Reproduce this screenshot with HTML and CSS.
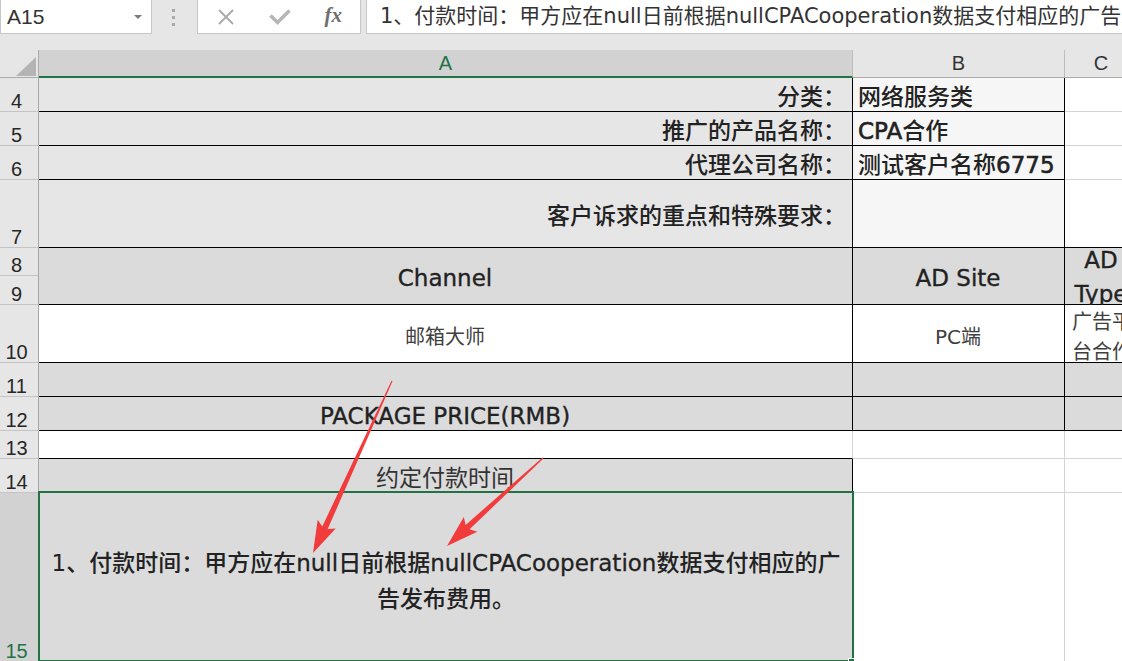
FILE: index.html
```html
<!DOCTYPE html>
<html lang="zh">
<head>
<meta charset="utf-8">
<title>Sheet</title>
<link rel="stylesheet" href="styles.css">
</head>
<body>
<div class="app">
  <div class="toolbar">
    <div class="namebox"><span class="ref">A15</span><span class="caret"></span></div>
    <div class="grip"><i></i><i></i><i></i></div>
    <div class="fxbox">
      <span class="slot"><svg width="18" height="16" viewBox="0 0 18 16"><path d="M2 1 L16 15 M16 1 L2 15" stroke="#a9a9a9" stroke-width="1.8" fill="none"/></svg></span>
      <span class="slot"><svg width="22" height="16" viewBox="0 0 22 16"><path d="M1.5 6.5 L8.5 13.5 L20.5 1.5" stroke="#b5b5b5" stroke-width="3.4" fill="none"/></svg></span>
      <span class="slot fx"><i>f</i>x</span>
    </div>
    <div class="formula">1、付款时间：甲方应在null日前根据nullCPACooperation数据支付相应的广告发布费用。</div>
  </div>

  <div class="sheet">
    <div class="corner"><svg width="20" height="19" viewBox="0 0 20 19"><polygon points="20,0 20,19 0,19" fill="#b4b4b4"/></svg></div>
    <div class="ch sel">A</div>
    <div class="ch">B</div>
    <div class="ch">C</div>

    <div class="rh">4</div>
    <div class="c b g1 right bold">分类：</div>
    <div class="c b g3 bold">网络服务类</div>
    <div class="c"></div>

    <div class="rh">5</div>
    <div class="c b g1 right bold">推广的产品名称：</div>
    <div class="c b g3 bold"><span class="heavy">CPA</span>合作</div>
    <div class="c"></div>

    <div class="rh">6</div>
    <div class="c b g1 right bold">代理公司名称：</div>
    <div class="c b g3 bold">测试客户名称<span class="heavy">6775</span></div>
    <div class="c"></div>

    <div class="rh">7</div>
    <div class="c b g1 right bold">客户诉求的重点和特殊要求：</div>
    <div class="c b g3"></div>
    <div class="c bb"></div>

    <div class="rh">8</div>
    <div class="c b g2 center span2 head">Channel</div>
    <div class="c b g2 center span2 head">AD Site</div>
    <div class="c b g2 center span2 head tall">AD Type</div>
    <div class="rh">9</div>

    <div class="rh">10</div>
    <div class="c b center small">邮箱大师</div>
    <div class="c b center small">PC端</div>
    <div class="c b small wrap">广告平台合作</div>

    <div class="rh">11</div>
    <div class="c b g2"></div>
    <div class="c b g2"></div>
    <div class="c b g2"></div>

    <div class="rh">12</div>
    <div class="c b g2 center head">PACKAGE PRICE(RMB)</div>
    <div class="c b g2"></div>
    <div class="c b g2"></div>

    <div class="rh">13</div>
    <div class="c bb"></div>
    <div class="c"></div>
    <div class="c"></div>

    <div class="rh">14</div>
    <div class="c br g2 center">约定付款时间</div>
    <div class="c"></div>
    <div class="c"></div>

    <div class="rh sel">15</div>
    <div class="c active center bold">
      <p class="para">1、付款时间：甲方应在<span class="lat">null</span>日前根据<span class="lat">nullCPACooperation</span>数据支付相应的广<br>告发布费用。</p>
      <span class="handle"></span>
    </div>
    <div class="c"></div>
    <div class="c"></div>
  </div>

  <svg class="arrows" width="1122" height="661" viewBox="0 0 1122 661">
    <polygon fill="#f23b3b" points="392.5,381.3 327.7,529.0 335.7,528.4 313,553 317.7,519.8 322.3,526.4 391.5,380.7"/>
    <polygon fill="#f23b3b" points="543.4,458.4 469.6,529.3 477.3,531.8 447,546 463.8,517.0 465.6,524.9 542.6,457.6"/>
  </svg>
</div>
</body>
</html>
```

FILE: styles.css
```css
* { box-sizing: border-box; }

html, body {
  margin: 0;
  padding: 0;
  overflow: hidden;
}

body {
  width: 1122px;
  height: 661px;
  font-family: "Liberation Sans", Arial, sans-serif;
  color: #262626;
}

.app {
  position: relative;
  width: 1122px;
  height: 661px;
  overflow: hidden;
  background: #e6e6e6;
}

/* ---------- toolbar ---------- */
.toolbar {
  display: flex;
  height: 34px;
}

.namebox {
  width: 152px;
  height: 34px;
  background: #fff;
  border: 1px solid #c6c6c6;
  border-top: 0;
  display: flex;
  align-items: center;
  justify-content: space-between;
  padding: 0 9px 0 6px;
  font-size: 21px;
  color: #333;
}

.caret {
  width: 0;
  height: 0;
  border-left: 4px solid transparent;
  border-right: 4px solid transparent;
  border-top: 4px solid #7b7b7b;
}

.grip {
  width: 45px;
  padding-right: 3px;
  display: flex;
  flex-direction: column;
  align-items: center;
  justify-content: center;
  gap: 4px;
}

.grip i {
  display: block;
  width: 3px;
  height: 3px;
  background: #a8a8a8;
}

.fxbox {
  width: 164px;
  height: 34px;
  background: #fff;
  border: 1px solid #c6c6c6;
  border-top: 0;
  display: flex;
  align-items: center;
  padding-left: 1px;
}

.slot {
  width: 54px;
  display: flex;
  align-items: center;
  justify-content: center;
}

.fx {
  font-family: "Liberation Serif", "DejaVu Serif", serif;
  font-style: italic;
  font-weight: 700;
  font-size: 21px;
  color: #6e6e6e;
  padding-bottom: 2px;
}

.fx i { font-style: italic; }

.formula {
  flex: 1;
  margin-left: 5px;
  height: 34px;
  background: #fff;
  border: 1px solid #c6c6c6;
  border-top: 0;
  border-right: 0;
  padding-left: 13px;
  font-family: "DejaVu Sans", "Noto Sans CJK SC", sans-serif;
  font-size: 21px;
  line-height: 33px;
  color: #333;
  white-space: nowrap;
  overflow: hidden;
}

/* ---------- sheet grid ---------- */
.sheet {
  margin-top: 16px;
  display: grid;
  grid-template-columns: 39px 814px 212px 73px;
  grid-template-rows: 28px 34px 34px 34px 68px 28px 29px 58px 34px 34px 28px 34px 169px;
}

.corner {
  background: #e6e6e6;
  border-right: 1px solid #ababab;
  border-bottom: 1px solid #ababab;
  display: flex;
  align-items: flex-end;
  justify-content: flex-end;
  padding: 0 2px 1px 0;
}

.ch {
  background: #e6e6e6;
  border-right: 1px solid #bdbdbd;
  border-bottom: 1px solid #ababab;
  display: flex;
  align-items: center;
  justify-content: center;
  font-size: 20px;
  color: #333;
}

.ch.sel {
  background: #d2d2d2;
  color: #217346;
  border-bottom: 2px solid #217346;
}

.rh {
  background: #e6e6e6;
  border-right: 1px solid #a6a6a6;
  border-bottom: 1px solid #c4c4c4;
  display: flex;
  align-items: flex-end;
  justify-content: center;
  padding-right: 5px;
  font-size: 20px;
  line-height: 20px;
  color: #262626;
}

.rh.sel {
  background: #d2d2d2;
  color: #217346;
}

/* cells */
.c {
  display: flex;
  align-items: center;
  background: #fff;
  border-right: 1px solid #d4d4d4;
  border-bottom: 1px solid #d4d4d4;
  padding: 6px 6px 0 5px;
  font-family: "DejaVu Sans", "Noto Sans CJK SC", sans-serif;
  font-size: 23px;
  line-height: 1.2;
  color: #333;
  white-space: nowrap;
}

.b { border-right-color: #000; border-bottom-color: #000; }
.bb { border-bottom-color: #000; }
.br { border-right-color: #000; }

.g1 { background: #e7e6e6; }
.g2 { background: #dbdbdb; }
.g3 { background: #f6f6f6; }

.right { justify-content: flex-end; }
.center { justify-content: center; text-align: center; }
.bold { font-weight: 500; color: #222; }
.head { color: #222; -webkit-text-stroke: 0.35px #222; }
.heavy { -webkit-text-stroke: 0.6px #222; }

.span2 { grid-row: span 2; }

.tall {
  white-space: normal;
  line-height: 34px;
  padding: 2px 0 0;
}

.small {
  font-size: 20px;
  color: #404040;
}

.wrap {
  white-space: normal;
  line-height: 30px;
  padding: 6px 0 0 7px;
  align-items: center;
}

/* selected cell */
.active {
  position: relative;
  z-index: 1;
  margin: -2px -1px 0 -1px;
  border: 2px solid #217346;
  background: #dbdbdb;
  padding: 8px 0 0;
}

.para {
  margin: 0;
  line-height: 36px;
  text-align: center;
}

.lat { font-weight: 400; -webkit-text-stroke: 0.3px #222; }

.handle {
  position: absolute;
  right: -3px;
  bottom: -5px;
  width: 7px;
  height: 7px;
  background: #217346;
  border: 1px solid #fff;
}

/* annotation arrows */
.arrows {
  position: absolute;
  left: 0;
  top: 0;
  pointer-events: none;
  z-index: 5;
}
```
